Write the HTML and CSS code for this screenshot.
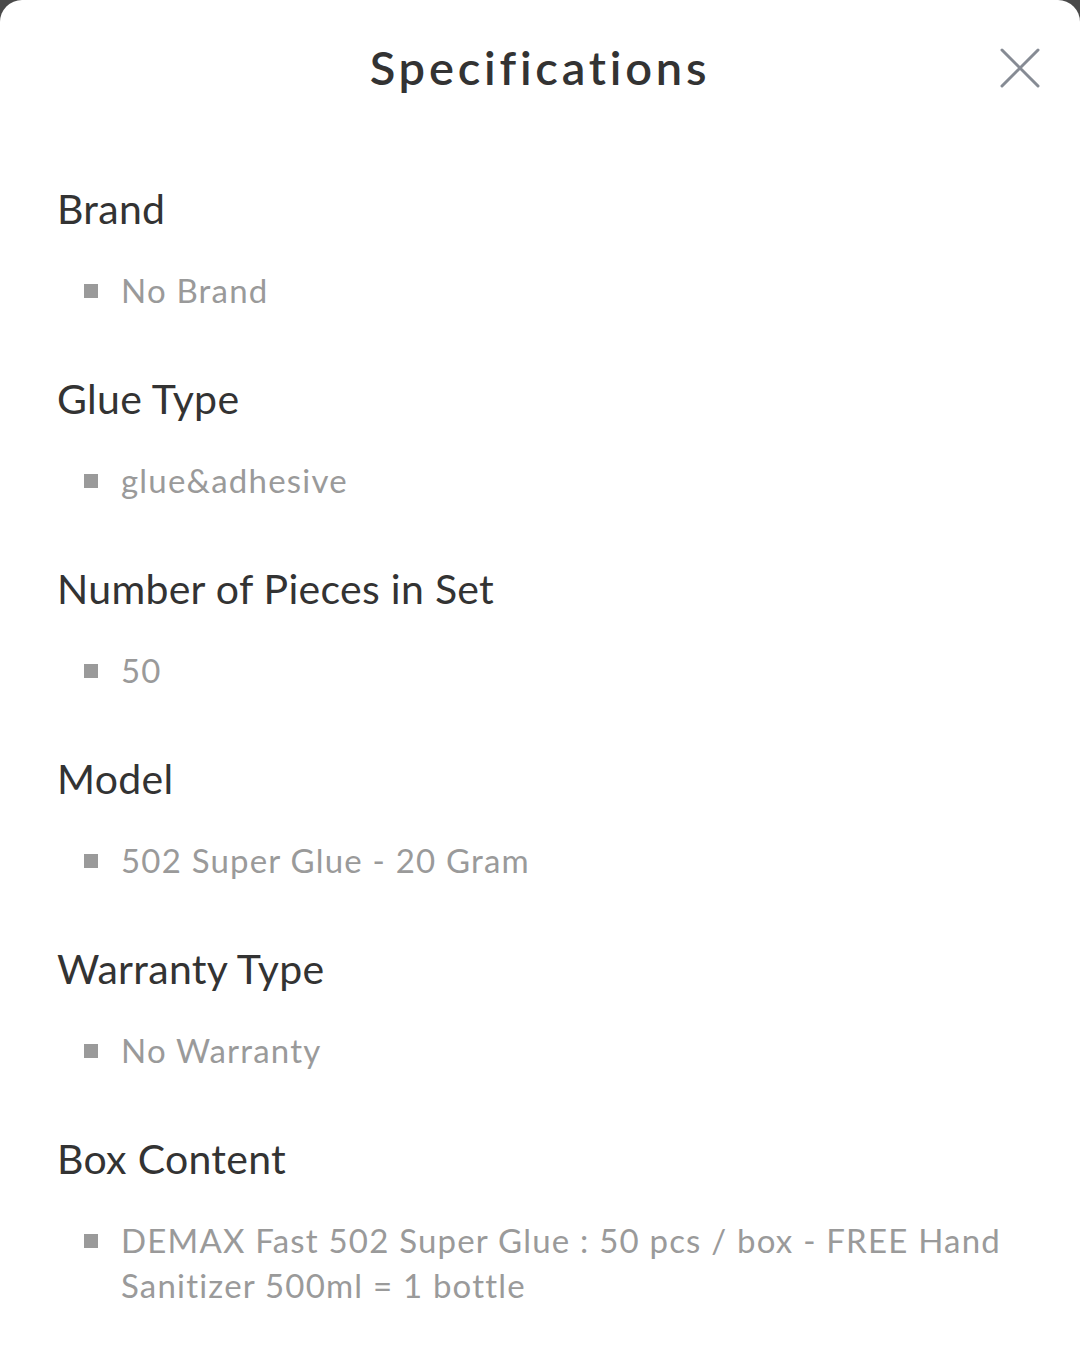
FILE: index.html
```html
<!DOCTYPE html>
<html lang="en">
<head>
<meta charset="utf-8">
<title>Specifications</title>
<link rel="stylesheet" href="styles.css">
</head>
<body>
<div class="sheet">
  <header class="header">
    <h1 class="title">Specifications</h1>
    <button class="close" aria-label="Close">
      <svg width="40" height="40" viewBox="0 0 40 40"><path d="M2 2 L38 38 M38 2 L2 38" stroke="#868b94" stroke-width="3" stroke-linecap="round" fill="none"/></svg>
    </button>
  </header>
  <div class="specs">
    <section class="spec">
      <h2 class="label">Brand</h2>
      <ul class="values"><li>No Brand</li></ul>
    </section>
    <section class="spec">
      <h2 class="label">Glue Type</h2>
      <ul class="values"><li>glue&amp;adhesive</li></ul>
    </section>
    <section class="spec">
      <h2 class="label">Number of Pieces in Set</h2>
      <ul class="values"><li>50</li></ul>
    </section>
    <section class="spec">
      <h2 class="label">Model</h2>
      <ul class="values"><li>502 Super Glue - 20 Gram</li></ul>
    </section>
    <section class="spec">
      <h2 class="label">Warranty Type</h2>
      <ul class="values"><li>No Warranty</li></ul>
    </section>
    <section class="spec">
      <h2 class="label">Box Content</h2>
      <ul class="values"><li>DEMAX Fast 502 Super Glue : 50 pcs / box - FREE Hand Sanitizer 500ml = 1 bottle</li></ul>
    </section>
  </div>
</div>
</body>
</html>
```
FILE: styles.css
```css
html, body {
  margin: 0;
  padding: 0;
  background: #4a4a4a;
}
body {
  font-family: Lato, "Noto Sans", sans-serif;
}
.sheet {
  background: #fff;
  border-radius: 22px 22px 0 0;
  min-height: 1349px;
  box-sizing: border-box;
}
.header {
  position: relative;
  height: 136px;
  display: flex;
  align-items: center;
  justify-content: center;
}
.title {
  margin: 0;
  font-size: 47px;
  font-weight: 600;
  color: #333;
  letter-spacing: 3.8px;
  line-height: 1;
  transform: translateY(-1px);
}
.close {
  position: absolute;
  right: 40px;
  top: 48px;
  width: 40px;
  height: 40px;
  padding: 0;
  border: 0;
  background: none;
}
.close svg { display: block; }
.specs {
  padding: 43px 60px 0 57px;
}
.spec {
  margin-bottom: 56px;
}
.label {
  margin: 0;
  font-size: 41px;
  font-weight: 400;
  line-height: 60px;
  color: #333;
  letter-spacing: 0.3px;
}
.values {
  list-style: none;
  margin: 29px 0 0;
  padding: 0 0 0 27px;
}
.values li {
  display: flex;
  font-size: 33px;
  line-height: 45px;
  color: #9a9a9a;
  letter-spacing: 1.2px;
}
.values li::before {
  content: "";
  flex: none;
  width: 14px;
  height: 14px;
  background: #9a9a9a;
  margin: 16px 23px 0 0;
}
```
